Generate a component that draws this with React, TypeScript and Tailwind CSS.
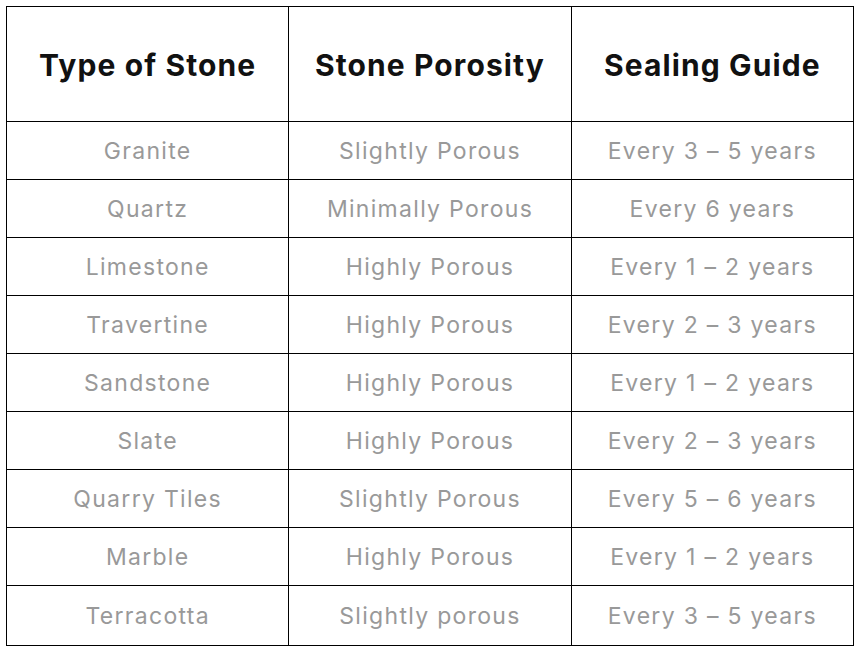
const rows: [string, string, string][] = [
  ['Granite', 'Slightly Porous', 'Every 3 – 5 years'],
  ['Quartz', 'Minimally Porous', 'Every 6 years'],
  ['Limestone', 'Highly Porous', 'Every 1 – 2 years'],
  ['Travertine', 'Highly Porous', 'Every 2 – 3 years'],
  ['Sandstone', 'Highly Porous', 'Every 1 – 2 years'],
  ['Slate', 'Highly Porous', 'Every 2 – 3 years'],
  ['Quarry Tiles', 'Slightly Porous', 'Every 5 – 6 years'],
  ['Marble', 'Highly Porous', 'Every 1 – 2 years'],
  ['Terracotta', 'Slightly porous', 'Every 3 – 5 years'],
]

const headers = ['Type of Stone', 'Stone Porosity', 'Sealing Guide']

export default function App() {
  return (
    <div className="w-[861px] h-[654px] bg-white pl-[6px] pt-[6px]">
      <table className="w-[848px] border-collapse table-fixed">
        <thead>
          <tr className="h-[115px]">
            {headers.map((h) => (
              <th
                key={h}
                className="border-[1.5px] border-black text-center align-middle text-[30px] font-bold text-[#111] font-['Inter',sans-serif] tracking-[1.1px] pt-[2px]"
              >
                {h}
              </th>
            ))}
          </tr>
        </thead>
        <tbody>
          {rows.map((r, i) => (
            <tr key={i} className={i === rows.length - 1 ? 'h-[60px]' : 'h-[58px]'}>
              {r.map((c, j) => (
                <td
                  key={j}
                  className="border-[1.5px] border-black text-center align-middle text-[23px] text-[#999] font-['Inter',sans-serif] tracking-[1.3px] pt-[1px]"
                >
                  {c}
                </td>
              ))}
            </tr>
          ))}
        </tbody>
      </table>
    </div>
  )
}
